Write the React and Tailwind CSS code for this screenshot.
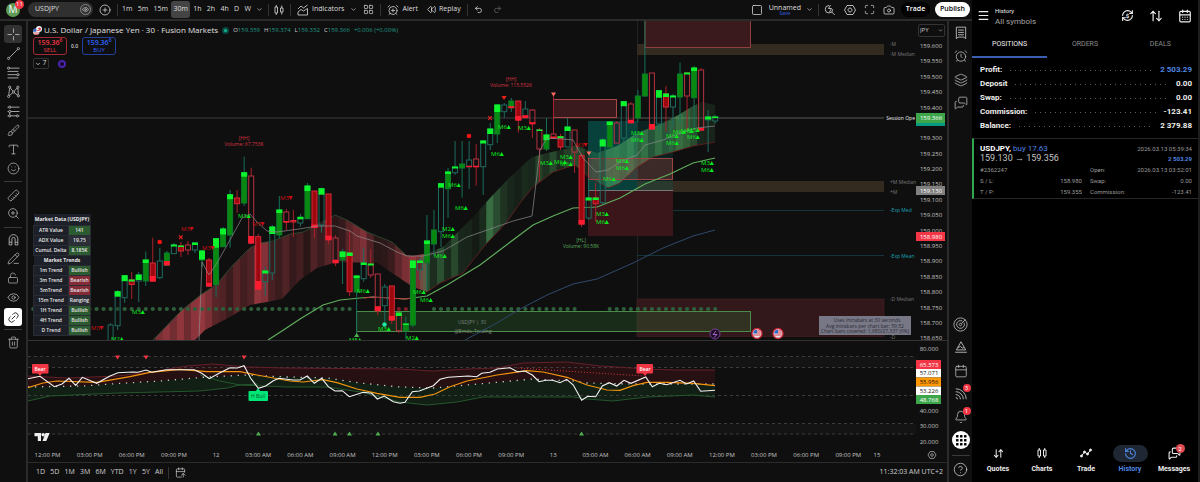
import React from "react";
import {
  Brush, Type, Smile, Ruler, ZoomIn, PencilLine, LockOpen, Eye, Link2, Trash2, CirclePlus, ChevronDown,
  LayoutGrid, AlarmClockPlus, AlarmClock, Rewind, Undo2, Redo2, Square, Maximize, Camera, Layers, MessagesSquare,
  Calendar, CalendarDays, Bell, CircleQuestionMark, Menu, ArrowDownUp, History, RefreshCw,
  CalendarArrowUp,
} from "lucide-react";

const X0 = 110.6;
const STEP = 7.03;
const cx = (i) => X0 + STEP * i;

/* kind, high, top, bottom, low, cap (positive: green at top, negative: red at bottom) */
const CANDLES = [
  ["h", 323, 325, 341, 341, 0], ["h", 290, 291.7, 325.7, 330, 5], ["h", 275, 275.7, 297.7, 303, 5.5], ["r", 272, 280, 284.5, 299, 1.5],
  ["h", 272, 275, 281, 302, 5], ["g", 251.7, 260, 281, 286, 3], ["r", 237.7, 263, 281, 281, -5], ["h", 248, 261, 277.7, 279, 0],
  ["g", 251, 253, 265, 266, -4], ["h", 243, 245, 253.7, 253.7, 1.5], ["r", 242, 246, 251, 257, 1], ["p", 241, 245, 250, 255, 0],
  ["h", 242, 243, 250, 253, 2], ["g", 250, 251, 260, 267, 8.5], ["r", 258, 260, 286, 287, -3], ["g", 238, 238.7, 284.7, 297, 9],
  ["g", 227, 229, 246.7, 247, 5.5], ["g", 190, 194.7, 235, 247.7, 4.5], ["r", 190, 198, 203.7, 213, 0], ["g", 156.7, 172.7, 203, 206, 4],
  ["p", 167.7, 176, 243, 244, -7], ["r", 234, 236.7, 289, 290, -8], ["h", 266.7, 271, 281.7, 296, 2.5], ["h", 225, 227, 273, 280, 7],
  ["g", 196, 210, 235, 238, 3], ["p", 209, 212, 222, 230, -1], ["r", 210, 220.5, 222, 237, 0], ["h", 214, 217.3, 223, 226.7, 2],
  ["g", 183, 186, 218.7, 219, 5], ["r", 191, 191, 227.5, 238, -3], ["h", 187.7, 188.7, 225, 232.7, 6], ["r", 194, 194, 239.7, 244, -4],
  ["p", 235, 238, 262.7, 266, -3], ["g", 249, 252, 260, 284, 5], ["r", 230.7, 253, 291.7, 296, 3], ["g", 275, 276, 292, 335, 2],
  ["h", 247.7, 263, 278.7, 281.7, 2], ["p", 249, 264, 275, 278, 1.5], ["p", 274, 274, 310.7, 315, -4.5], ["h", 284, 287, 305.7, 321.7, 0],
  ["r", 286, 286, 320, 324, -4], ["p", 312, 313, 330.7, 333, 3], ["g", 316.7, 324, 331, 339, 1], ["g", 260, 261, 325, 327, 7],
  ["h", 258, 261, 270, 280, 2], ["g", 215, 241, 262.7, 290, 3], ["g", 210, 230, 244, 256.7, 0], ["h", 183, 183.7, 231.7, 247, 4],
  ["g", 168, 172, 188.7, 218, 2], ["h", 141, 167, 172.7, 175, 1.5], ["g", 141, 164, 168, 197.7, 0], ["h", 141, 160, 166.7, 189, -1],
  ["p", 144, 159, 166.7, 185.7, -1], ["h", 140, 141, 166.7, 195, 2.5], ["h", 123, 129, 144.7, 150, 5], ["g", 104, 105, 134, 143, 7],
  ["h", 103, 105, 111.7, 118, 0], ["g", 98, 101, 107.7, 112, -1.5], ["r", 101, 101, 120, 132.7, -4], ["h", 101, 109, 117.7, 118, -2.5],
  ["p", 109, 110, 123.7, 138, -1.5], ["p", 128, 130, 149, 181.7, 1], ["g", 118, 135, 149, 151, 5], ["p", 95, 134, 138, 139, -1.5],
  ["r", 134, 136.7, 147, 150, 1.5], ["h", 118, 127, 147, 147, 4], ["p", 130, 130, 152, 173, 0], ["r", 153, 155.7, 224, 227, -4],
  ["h", 178, 198, 218, 220, 2.5], ["r", 183, 198, 203.7, 221.7, 2], ["h", 138, 140, 202.7, 204, 6.5], ["g", 121, 122, 147, 148, 3],
  ["p", 121, 123, 143, 143, 0], ["h", 101, 101.7, 138, 143, 4.5], ["p", 102, 104, 122.7, 124, -3], ["g", 90, 96, 118, 122, 0],
  ["g", 20, 74, 96, 97, 0], ["p", 73, 73, 129, 130, -5], ["h", 90, 90.7, 124, 131.7, 7], ["r", 86, 94, 107, 131.7, 3],
  ["h", 94, 96, 107, 127, 1.5], ["g", 62.7, 74, 97, 123, 0], ["p", 72, 73, 96, 130, 1.5], ["g", 66, 68, 97.7, 128, 3],
  ["p", 68, 70, 130, 131, -2], ["h", 110, 117, 120, 152, 2.5], ["h", 115, 117, 121, 124, 1],
];
const STYLE = {
  h: ["#0f0f0f", "#1f6b60", "#1f6b60"],
  g: ["#08890f", "#0c7d2c", "#15705a"],
  r: ["#9c0710", "#d92a38", "#a8202c"],
  p: ["#160d0e", "#b53342", "#a8202c"],
};

const RED_CLOUD = "153,340 182,310 202,294 217,284 233,265 250,248 260,243 273,241 290,234 303,232 317,225 335,215 347,220 367,232 392,242 406,255 413,256 427,253 427,292 413,287 395,275 377,263 337,262 317,268 300,280 282,299 267,302 250,305 230,317 205,330 195,340";
const GREEN_CLOUD = "420,256 427,253 443,247 460,230 473,217 490,198 510,177 532,157 547,153 570,148 575,145 597,153 617,146 637,133 663,123 680,114 693,106 702,102 715,105 715,142 693,146 673,152 653,157 637,167 620,183 608,188 590,178 575,165 553,172 533,187 520,203 507,222 487,243 473,260 463,273 440,283 427,292 420,289";
const RED_STRIPES = [30, 50, 58, 46, 60, 44, 58, 62, 50, 34, 30, 20, 34, 24, 30, 60, 54, 26, 20, 30, 18, 24, 12, 30, 20, 34, 12, 18, 34, 44, 52, 30, 12, 14, 20, 36, 50, 60, 50, 40, 22, 14, 30, 20];
const GREEN_STRIPES = [22, 36, 18, 38, 16, 34, 14, 12, 8, 16, 56, 36, 22, 14, 10, 16, 14, 30, 20, 34, 16, 28, 36, 30, 14, 20, 40, 50, 52, 46, 56, 40, 52, 34, 50, 36, 44, 56, 48, 36, 14, 12, 12];

const UP = [
  [138, 312, "M3"], [117, 339, "M2"], [244, 216, "M3"], [363, 291, "M6"], [454, 185, "M6"], [461, 208, "M6"], [448, 229, "M2"], [448, 236, "M6"],
  [440, 256, "M6"], [419, 292, "M6"], [426, 300, "M6"], [384, 329, "M3"], [412, 338, "M2"], [355, 340, "M5"], [504, 127, "M6"], [524, 128, "M3"],
  [497, 154, "M6"], [637, 133, "M3"], [637, 140, "M6"], [546, 163, "M3"], [560, 162, "M6"], [566, 157, "M3"], [566, 164, "M6"], [622, 161, "M3"],
  [622, 168, "M6"], [609, 179, "M6"], [602, 214, "M3"], [602, 222, "M6"], [672, 136, "M3"], [672, 143, "M6"], [679, 132, "M6"], [687, 131, "M6"],
  [693, 130, "M3"], [693, 137, "M6"], [707, 163, "M3"], [707, 170, "M6"],
];
const DOWN = [[187, 229], [208, 248], [286, 198], [258, 224], [97, 328], [581, 145]];

const WHITE_MA = "199,340 202,262 209,275 217,263 230,240 242,218 250,214 257,222 267,231 277,232 299,229 317,226 335,226 350,231 357,236 380,243 397,252 407,256 423,256 443,251 467,237 493,228 513,221 532,216 540,150 547,138 563,139 573,140 583,158 596,172 608,170 620,162 637,155 645,145 663,140 683,132 697,128 715,126";
const RSI = "28,378.7 40,376.3 54.3,386.7 62,384 69,378.3 75.7,385.3 82.3,377.3 96.7,383.3 110,376 118,372.7 133,372 138,372.3 146,370 151.7,372.3 166.7,369.7 194.3,369.7 201.7,373.3 209.3,378.7 220,372.7 230,367.7 237.3,368 244,365.7 250.7,378.3 258.3,388.3 265.7,386 273.3,380.7 279,378.3 293,380 300,380 307.3,376 314.3,383.3 321.7,378.3 328.3,386.7 335,391 342.3,390.7 349.3,396.7 363.3,392.3 371.7,393.3 377.3,399 384.3,396 393.3,401.7 400,403.3 405,402.3 412.3,391.7 419.3,391 433.3,385.7 440,379.3 448.3,377.3 468.3,376 476.7,376.7 481.7,373.3 490,372.3 497.3,369 510,367.7 517.3,371.7 525,371 532.3,375 539,381.7 545.7,380.3 552.7,380.3 560,382.7 566.7,379.3 573.3,385 581.7,400.3 587.7,396.3 595.7,396.7 602.3,386 609.3,382.7 616.7,386 624,380.3 631,383.3 645.7,377 652.3,386.7 659.3,383.3 666.7,384.7 680,380.3 686.7,384 693.7,381 700.7,391.3 715,390.3";
const RSI_MA = "28,387.7 43,383 57,381 97,382.3 130,376.7 150,372.3 180,369.3 207,371.7 240,371.7 257,375 290,381 303,382 323,379.7 337,382.7 357,389 377,393.3 400,397.3 420,397.3 435,394 450,386.7 467,381 497,375 527,370.7 543,372 567,377.3 587,385 607,390 620,390.3 633,385.7 647,382.3 667,382.3 693,383.3 715,385.7";
const B_UP = "28,376 67,378 117,376 150,372 187,366 213,364 247,367 287,368 400,369 433,371 467,369 497,368 523,363 567,362 600,366 647,369 677,370 715,370";
const B_MID = "28,387 83,386 110,384 160,381 207,377 247,375 287,377 327,378 360,383 400,387 433,388 467,385 500,382 533,379 573,381 587,383 633,384 715,384";
const B_LOW = "28,401 50,396 117,393 200,391 227,388 240,385 287,387 327,387 360,392 400,402 427,405 457,402 483,397 573,397 587,399 613,401 647,397 693,395 715,397";
const rev = (s) => s.split(" ").reverse().join(" ");

const PRICES = ["159.600", "159.550", "159.500", "159.450", "159.400", "", "159.300", "159.250", "159.200", "159.150", "159.100", "159.050", "159.000", "158.950", "158.900", "158.850", "158.800", "158.750", "158.700", "158.650"];
const TIMES = ["12:00 PM", "03:00 PM", "06:00 PM", "09:00 PM", "12", "03:00 AM", "06:00 AM", "09:00 AM", "12:00 PM", "03:00 PM", "06:00 PM", "09:00 PM", "13", "03:00 AM", "06:00 AM", "09:00 AM", "12:00 PM", "03:00 PM", "06:00 PM", "09:00 PM"];

function Tag({ y, h = 9, w = 29, fill, color = "#fff", children }) {
  return (
    <g>
      <rect x="916" y={y} width={w} height={h} fill={fill} />
      <text x={w > 26 ? 931 : 929} y={y + h / 2 + 2} fontSize="6" fontWeight="500" textAnchor="middle" fill={color}>{children}</text>
    </g>
  );
}

function Flag({ x, y }) {
  return (
    <g>
      <circle cx={x} cy={y} r="5" fill="#e8e4ea" stroke="#c62836" strokeWidth="1.3" />
      <path d={`M${x - 3.8} ${y}a3.8 3.8 0 0 1 3.8 -3.8v3.8z`} fill="#2f67c8" />
      <path d={`M${x} ${y - 2.5}h3M${x} ${y - 0.5}h3.8M${x - 3.8} ${y + 1.5}h7.4`} stroke="#d8414b" strokeWidth="1" />
    </g>
  );
}

function PriceChart() {
  const dots = [];
  for (let i = -11; i <= 86; i++) {
    if ((i > 34 && i < 40) || (i > 42 && i < 46) || (i > 66 && i < 71)) continue;
    dots.push(<circle key={i} cx={cx(i)} cy="309" r="2.1" fill={i >= 40 && i <= 42 ? "#7a1f28" : "#2f5f3a"} />);
  }
  return (
    <svg viewBox="28 21 919 441" preserveAspectRatio="xMinYMin meet" className="block w-full font-['Open_Sans',sans-serif]" role="img" aria-label="USDJPY 30 minute price chart with oscillator">
      <defs>
        <clipPath id="pane"><rect x="28" y="21" width="889" height="319" /></clipPath>
        <clipPath id="redCloud"><polygon points={RED_CLOUD} /></clipPath>
        <clipPath id="greenCloud"><polygon points={GREEN_CLOUD} /></clipPath>
      </defs>
      <g clipPath="url(#pane)">
        <path d="M637.5 21V337" stroke="#242424" />
        <rect x="637" y="44" width="247" height="11" fill="#332a20" />
        <rect x="645" y="10" width="105.5" height="37.5" fill="#3a1a1d" stroke="#8f3f40" />
        <rect x="637" y="181" width="247" height="11" fill="#332a20" />
        <path d="M637 210.5H884M637 255.5H884" stroke="#12343a" />
        <rect x="637" y="299" width="247" height="37.5" fill="#33181b" stroke="#4a2426" strokeWidth=".6" />
        <rect x="356.5" y="311.5" width="394" height="20" fill="#2f6b2f" fillOpacity=".32" stroke="#4a8b48" />
        <text x="472" y="324" fontSize="5" textAnchor="middle" fill="#7b837b">USDJPY | 30</text>
        <text x="473" y="333" fontSize="5" textAnchor="middle" fill="#7b837b">@Emds_Trading</text>
        <path d="M28 118H637" stroke="#3a3d3a" strokeWidth="1" />
        <path d="M637 118H884" stroke="#565a56" strokeWidth="1" />
        <rect x="588" y="121" width="49" height="69" fill="#00897b" fillOpacity=".42" />
        <rect x="637" y="121" width="36" height="69" fill="#00897b" fillOpacity=".16" />
        <rect x="588" y="190" width="85" height="46" fill="#3a161b" />
        <path d="M588 190.5H673" stroke="#777" />
        <g clipPath="url(#redCloud)">
          {RED_STRIPES.map((a, k) => <rect key={k} x={cx(5 + k) + 3} y="200" width="7.1" height="142" fill="#e5505c" fillOpacity={a / 100} />)}
        </g>
        <g clipPath="url(#greenCloud)">
          {GREEN_STRIPES.map((a, k) => <rect key={k} x={cx(44 + k) - 4} y="90" width="7.1" height="210" fill="#58b868" fillOpacity={a / 100} />)}
        </g>
        <polyline points="153,340 182,310 202,294 217,284 233,265 250,248 260,243 273,241 290,234 303,232 317,225 335,215 347,220 367,232 392,242 406,255" fill="none" stroke="#2c4f30" strokeWidth=".8" />
        <polyline points="427,292 440,283 463,273 473,260 487,243 507,222 520,203 533,187 553,172 575,165 590,178 608,188 620,183 637,167 653,157 673,152 693,146 715,142" fill="none" stroke="#6d2020" strokeWidth=".8" />
        <rect x="553.5" y="99.5" width="63" height="18" fill="#3a1a1d" stroke="#a84848" />
        <rect x="588.5" y="158.5" width="84" height="21" fill="#a03a3a" fillOpacity=".32" stroke="#9c4444" />
        {dots}
        <polyline points="268,340 285,329 300,319 323,305 340,300 360,298 373,297 405,299 427,296 447,285 480,265 513,240 533,225 553,216 573,208 597,207 620,198 645,184 670,174 693,163 715,158" fill="none" stroke="#5fae5c" strokeWidth="1.2" />
        <path d="M364 298L373 297L405 299L412 298" fill="none" stroke="#c33a3f" strokeWidth="1.2" />
        <polyline points="465,340 497,323 520,309 547,295 573,284 597,279 633,263 663,248 693,236 715,230" fill="none" stroke="#30496c" />
        {CANDLES.map(([kind, hi, top, bot, lo, cap], i) => {
          const [fill, stroke, wick] = STYLE[kind];
          const x = cx(i);
          return (
            <g key={i}>
              <path d={`M${x} ${hi}V${top}M${x} ${bot}V${lo}`} stroke={wick} />
              <rect x={x - 2.5} y={top} width="5" height={Math.max(bot - top, 1)} fill={fill} fillOpacity={kind === "h" || kind === "p" ? 0.25 : 1} stroke={stroke} />
              {cap > 0 && <rect x={x - 3} y={top - 0.5} width="6" height={cap + 0.5} fill="#0cf52c" />}
              {cap < 0 && <rect x={x - 3} y={bot + cap} width="6" height={0.5 - cap} fill="#ff1c30" />}
            </g>
          );
        })}
        <polyline points={WHITE_MA} fill="none" stroke="#8c8c8c" strokeWidth=".7" />
        {UP.map(([x, y, t], i) => (
          <g key={i} fill="#09e81c">
            <text x={x - 6} y={y + 2} fontSize="6">{t}</text>
            <path d={`M${x + 2.5} ${y + 2}l2.2 -4l2.2 4z`} />
          </g>
        ))}
        {DOWN.map(([x, y], i) => (
          <g key={i} fill="#c60f14">
            <text x={x - 6} y={y + 2} fontSize="6">M3</text>
            <path d={`M${x + 2.5} ${y - 2}h4.4l-2.2 4z`} />
          </g>
        ))}
        <path d="M501.5 96h5l-2.5 4z" fill="#f22218" />
        <path d="M551 92.5h5l-2.5 4zM586.5 151.5h5l-2.5 4z" fill="#ff6a60" />
        <circle cx="159.7" cy="242" r="2.3" fill="#f01414" />
        <circle cx="469" cy="136" r="2.3" fill="#f01414" />
        <circle cx="384.5" cy="324.5" r="2.2" fill="#20e8a0" />
        <path d="M179 235.5l3.6 3.6m0 -3.6l-3.6 3.6M488.2 116.2l3.6 3.6m0 -3.6l-3.6 3.6" stroke="#ee2222" strokeWidth="1.1" />
        <path d="M354 337l2.7 -4l2.7 4z" fill="#4caf50" />
        <g fontSize="5" textAnchor="middle">
          <g fill="#d93344"><text x="244" y="140">[HH]</text><text x="244" y="146">Volume: 67.753K</text><text x="511" y="81">[HH]</text><text x="511" y="87">Volume: 115.552K</text></g>
          <g fill="#5bab5e"><text x="581" y="242">[HL]</text><text x="581" y="248">Volume: 90.58K</text></g>
        </g>
        <g fontSize="5" fill="#77777a">
          <text x="890" y="46">-M</text><text x="890" y="56">-M Median</text>
          <text x="890" y="184">+M Median</text><text x="890" y="194">+M</text>
          <text x="890" y="301">-D Median</text><text x="890" y="339">-D</text>
          <g fill="#16a3b4"><text x="890" y="212">-Exp Med</text><text x="890" y="258">-Exp Mean</text></g>
        </g>
        <text x="915" y="120" fontSize="5" fontWeight="500" textAnchor="end" fill="#eee">Session Ope</text>
        <circle cx="715" cy="334" r="5" fill="#1c0f26" stroke="#7a3b96" />
        <path d="M716 331l-3 3.5h4l-3 3" fill="none" stroke="#b56fd6" strokeWidth=".9" />
        <Flag x={757} y={333.5} />
        <Flag x={778} y={333.5} />
        <rect x="819" y="316" width="92" height="19" fill="#777785" />
        <g fontSize="5" textAnchor="middle" fill="#2b2b36">
          <text x="867" y="322">Uses intrabars at 30 seconds</text>
          <text x="865" y="328">Avg intrabars per chart bar: 59.52</text>
          <text x="865" y="333">Chart bars covered: 1,680/27,337 (6%)</text>
        </g>
      </g>
      <path d="M28 340.5H947" stroke="#333" />

      <g>
        <rect x="28" y="356.5" width="888" height="11" fill="#141414" />
        <rect x="28" y="423.5" width="888" height="10.5" fill="#141414" />
        <polygon points={`${B_UP} ${rev(B_MID)}`} fill="#261012" />
        <polygon points={`${B_MID} ${rev(B_LOW)}`} fill="#111f14" />
        <path d="M28 356.5H916M28 367.5H916M28 395.5H916M28 423.5H916M28 434H916" stroke="#474747" strokeWidth=".8" strokeDasharray="3 3" />
        <polyline points={B_UP} fill="none" stroke="#64202a" />
        <polyline points={B_LOW} fill="none" stroke="#24562c" />
        <polyline points="200,375 220,381 240,385 258,384" fill="none" stroke="#24562c" />
        <polyline points={B_MID} fill="none" stroke="#ccc" strokeWidth="1.3" strokeDasharray="1.3 5.7" />
        <path d="M518 368L643 376" stroke="#d03a3a" strokeDasharray="1 2" />
        <polyline points={RSI_MA} fill="none" stroke="#f2940c" strokeWidth="1.2" />
        <polyline points={RSI} fill="none" stroke="#f4f4f4" strokeWidth="1.1" />
        <g fill="#f23645">
          <rect x="32" y="364" width="16.5" height="9.5" rx="1" /><path d="M37.5 373h5l-2.5 3z" />
          <rect x="636.5" y="364" width="16.5" height="9.5" rx="1" /><path d="M642.5 373h5l-2.5 3z" />
          <path d="M115 355.5h5l-2.5 4zM143.5 355.5h5l-2.5 4zM241.5 355.5h5l-2.5 4z" />
        </g>
        <g fill="#00e676"><rect x="248.5" y="391" width="19.5" height="10" rx="1" /><path d="M255.5 391.5h5l-2.5 -3.5z" /></g>
        <g fontSize="5" fontWeight="600" textAnchor="middle"><text x="40" y="371" fill="#fff">Bear</text><text x="645" y="371" fill="#fff">Bear</text><text x="258" y="398" fill="#07552c" fontWeight="400">H Bull</text></g>
        <g fill="#4caf50">{[258.5, 335, 349.5, 378, 581.5].map((x) => <path key={x} d={`M${x - 2.5} 435.5h5l-2.5 -4z`} />)}</g>
        <path d="M34.5 433h6.500v8h-3.200v-4.800h-3.300zM45.5 433h4.200l-3.400 8h-3.800z" fill="#eee" />
        <circle cx="43.2" cy="434.8" r="1.7" fill="#eee" />
      </g>

      <g fontSize="6" fill="#c4c4c4" textAnchor="middle">
        {PRICES.map((p, i) => <text key={i} x="931" y={48 + 15.385 * i}>{p}</text>)}
        <text x="929" y="351">80.000</text><text x="929" y="413">40.000</text><text x="929" y="428">30.000</text><text x="929" y="444">20.000</text>
        {TIMES.map((t, i) => <text key={i} x={47.5 + 42.15 * i} y="457">{t}</text>)}
        <text x="877" y="457">15</text>
      </g>
      <rect x="916" y="121" width="29" height="5" fill="#089981" />
      <Tag y={113} h={10} fill="#3da64b">159.366</Tag>
      <Tag y={186} fill="#808080">159.130</Tag>
      <Tag y={232} fill="#f23645">158.980</Tag>
      <Tag y={360} w={25} fill="#f23645">65.373</Tag>
      <Tag y={369} w={25} h={8.5} fill="#fff" color="#111">57.071</Tag>
      <Tag y={377.5} w={25} fill="#ff9800" color="#111">55.956</Tag>
      <Tag y={386.5} w={25} h={8.5} fill="#fff" color="#111">53.226</Tag>
      <Tag y={395} w={25} fill="#3da64b">48.768</Tag>
      <path d="M928 455l2 -3.400h4l2 3.400l-2 3.400h-4z" fill="none" stroke="#aaa" strokeWidth=".8" /><circle cx="932" cy="455" r="1.300" fill="none" stroke="#aaa" strokeWidth=".8" />
    </svg>
  );
}

const MARKET = [["ATR Value", "141", "g"], ["ADX Value", "19.75", "n"], ["Cumul. Delta", "8.185K", "g"]];
const TRENDS = [["1m Trend", "Bullish", "g"], ["3m Trend", "Bearish", "r"], ["5mTrend", "Bearish", "r"], ["15m Trend", "Ranging", "n"], ["1H Trend", "Bullish", "g"], ["4H Trend", "Bullish", "g"], ["D Trend", "Bullish", "g"]];
const CELL = { g: "bg-[#2c5a31]", r: "bg-[#822a35]", n: "bg-[#2c2e38]" };

function DataRows({ rows }) {
  return rows.map(([k, v, c]) => (
    <tr key={k} className="h-[10px]">
      <th scope="row" className="border border-[#2a2c34] bg-[#1e2029] p-0 font-semibold">{k}</th>
      <td className={`border border-[#2a2c34] p-0 text-center ${CELL[c]}`}>{v}</td>
    </tr>
  ));
}

function MarketTable() {
  return (
    <table className="absolute top-[193px] left-[5px] w-[58px] border-collapse text-[5px] leading-[9px] font-semibold text-[#e8e8e8]">
      <tbody>
        <tr className="h-[11px]"><th colSpan={2} className="bg-[#1e2029] p-0">Market Data (USDJPY)</th></tr>
        <DataRows rows={MARKET} />
        <tr className="h-[10px]"><th colSpan={2} className="bg-[#1e2029] p-0">Market Trends</th></tr>
        <DataRows rows={TRENDS} />
      </tbody>
    </table>
  );
}

function Line({ d, dots = [], size = 13, weight = 1.6 }) {
  return (
    <svg viewBox="0 0 24 24" width={size} height={size} fill="none" stroke="currentColor" strokeWidth={weight} strokeLinejoin="round" aria-hidden="true">
      <path d={d} />
      {dots.map(([x, y], i) => <circle key={i} cx={x} cy={y} r="2" fill="#0f0f0f" />)}
    </svg>
  );
}

function DotGrid() {
  return (
    <svg viewBox="0 0 24 24" width="12" height="12" fill="currentColor" aria-hidden="true">
      {[2, 10, 18].map((y) => [2, 10, 18].map((x) => <rect key={`${x}-${y}`} x={x} y={y} width="5" height="5" rx="1" />))}
    </svg>
  );
}

function Tool({ label, className = "", children }) {
  return <button aria-label={label} className={`flex h-[18px] w-[18px] shrink-0 items-center justify-center rounded-[3px] ${className}`}>{children}</button>;
}
const I = { size: 13, strokeWidth: 1.4 };
const Sep = () => <span className="h-px w-[18px] shrink-0 bg-[#3a3a3a]" />;
const VSep = ({ className = "" }) => <span className={`h-[12px] w-px shrink-0 bg-[#333] ${className}`} />;

function LeftTools() {
  return (
    <nav aria-label="Drawing tools" className="flex w-[28px] shrink-0 flex-col items-center border-r-2 border-[#2b2b2b] pt-[4px]">
      <div className="flex h-[153px] flex-col justify-between">
        <Tool label="Cross" className="bg-[#323232]"><Line d="M12 1v8M12 15v8M1 12h8M15 12h8" /></Tool>
        <Tool label="Trend line"><Line d="M3 21L21 3" dots={[[3, 21], [21, 3]]} /></Tool>
        <Tool label="Fibonacci"><Line d="M1 4h22M1 10h20M1 16h22M1 22h20" dots={[[3, 4], [20, 16]]} /></Tool>
        <Tool label="Patterns"><Line d="M3 21L5 4L12 13L20 4L21 20L12 13L3 21" dots={[[3, 21], [5, 4], [12, 13], [20, 4], [21, 20]]} /></Tool>
        <Tool label="Forecasting"><Line d="M1 4h22M1 12h22M1 20h22M5 12v8" dots={[[5, 4], [5, 12], [5, 20], [19, 20]]} /></Tool>
        <Tool label="Brush"><Brush {...I} /></Tool>
        <Tool label="Text"><Type {...I} /></Tool>
        <Tool label="Icons"><Smile {...I} /></Tool>
      </div>
      <span className="h-[3px]" /><Sep /><span className="h-[4px]" />
      <Tool label="Measure"><Ruler {...I} className="rotate-90" /></Tool>
      <Tool label="Zoom in"><ZoomIn {...I} /></Tool>
      <span className="h-[5px]" /><Sep /><span className="h-[2px]" />
      <div className="flex h-[96px] flex-col justify-between">
        <Tool label="Magnet"><Line d="M4 22V11a8 8 0 0 1 16 0v11h-5V11a3 3 0 0 0 -6 0v11zM4 17h5M15 17h5" /></Tool>
        <Tool label="Keep drawing"><PencilLine {...I} /></Tool>
        <Tool label="Lock drawings"><LockOpen {...I} size={12} /></Tool>
        <Tool label="Hide drawings"><Eye {...I} /></Tool>
        <Tool label="Sync drawings" className="bg-white text-black"><Link2 {...I} className="-rotate-45" /></Tool>
      </div>
      <span className="h-[3px]" /><Sep /><span className="h-[3px]" />
      <Tool label="Remove"><Trash2 {...I} /></Tool>
    </nav>
  );
}

function Badge({ children }) {
  return <span className="absolute -top-[1px] -right-[1px] flex h-[8px] w-[8px] items-center justify-center rounded-full bg-[#f23645] text-[6px] leading-none text-white">{children}</span>;
}

function RightTools() {
  return (
    <nav aria-label="Widgets" className="flex w-[25px] shrink-0 flex-col items-center justify-between border-l-2 border-[#2b2b2b] pt-[3px] pb-[3px]">
      <div className="flex h-[88px] flex-col justify-between">
        <Tool label="Watchlist"><Line size={14} d="M4 2h16v20l-3 -3h-10l-3 3zM7 7h10M7 11h10M7 15h10" /></Tool>
        <Tool label="Alerts"><AlarmClock {...I} size={14} /></Tool>
        <Tool label="Object tree"><Layers {...I} size={14} /></Tool>
        <Tool label="Chats"><MessagesSquare {...I} size={14} className="-scale-x-100" /></Tool>
      </div>
      <div className="flex h-[164px] flex-col items-center justify-between">
        <Tool label="Screeners"><Line size={15} weight={1.4} d="M12 1.500a10.500 10.500 0 1 0 .01 0M17.500 9a6.200 6.200 0 1 1 -2.500 -2.500M12 10a2 2 0 1 0 .01 0M13.500 10.500L20 4" /></Tool>
        <Tool label="Ideas"><Line size={14} d="M2 21h20M4 17L12 3L20 17zM7 13l4 -2l3 3l3 -1" /></Tool>
        <Tool label="Calendar"><Calendar {...I} size={14} /></Tool>
        <Tool label="Feed" className="relative"><Line size={14} d="M3 3a18 18 0 0 1 18 18M3 8a13 13 0 0 1 13 13M3 13a8 8 0 0 1 8 8M3 18a3 3 0 0 1 3 3" /><Badge>3</Badge></Tool>
        <Tool label="Notifications" className="relative"><Bell {...I} size={14} /><Badge>1</Badge></Tool>
        <Tool label="Products" className="rounded-full bg-white text-black"><DotGrid /></Tool>
        <Sep />
        <Tool label="Help"><CircleQuestionMark {...I} size={15} /></Tool>
      </div>
    </nav>
  );
}

const FRAMES = ["1m", "5m", "15m", "30m", "1h", "2h", "4h", "D", "W"];

function TopBar() {
  return (
    <header className="flex h-[21px] shrink-0 items-center border-b-2 border-[#2b2b2b] pr-[2px] pl-[6px] text-[7px] font-medium text-[#dedede]">
      <button aria-label="Account" className="relative flex h-[14px] w-[14px] shrink-0 items-center justify-center rounded-full bg-[#5f9a55] text-[10px] text-white">
        M<span className="absolute -top-[3px] left-[9px] flex h-[9px] w-[9px] items-center justify-center rounded-full bg-[#f23645] text-[6px]">11</span>
      </button>
      <button className="ml-[8px] flex h-[15px] w-[65px] shrink-0 items-center justify-between rounded-full bg-[#303030] pr-[2px] pl-[7px] text-[7px]">
        USDJPY
        <span className="flex h-[11px] w-[11px] items-center justify-center rounded-full border border-[#888]"><Eye size={7} /></span>
      </button>
      <button aria-label="Compare" className="ml-[6px]"><CirclePlus size={12} strokeWidth={1.5} /></button>
      <VSep className="ml-[6px]" />
      <div className="ml-[2px] flex w-[133px] shrink-0 items-center justify-between">
        {FRAMES.map((f) => <button key={f} className={`flex h-[17px] items-center rounded-[3px] px-[2px] ${f === "30m" ? "bg-[#444]" : ""}`}>{f}</button>)}
      </div>
      <button aria-label="More intervals" className="ml-[3px]"><ChevronDown size={7} /></button>
      <VSep className="ml-[5px]" />
      <button aria-label="Chart style" className="ml-[4px]"><Line size={12} d="M4 6h5v12h-5zM6.500 2v4M6.500 18v4M15 8h5v8h-5zM17.500 3v5M17.500 16v5" /></button>
      <VSep className="ml-[5px]" />
      <button className="ml-[6px] flex items-center gap-[3px]"><Line size={12} d="M2 10l6 -6l5 4l8 -6M2 22v-6l6 -5l5 3l8 -5v13z" />Indicators</button>
      <button aria-label="Indicator favourites" className="ml-[6px]"><ChevronDown size={7} /></button>
      <button aria-label="Layout templates" className="ml-[6px]"><LayoutGrid size={11} strokeWidth={1.5} /></button>
      <VSep className="ml-[6px]" />
      <button className="ml-[6px] flex items-center gap-[3px]"><AlarmClockPlus size={12} strokeWidth={1.5} />Alert</button>
      <button className="ml-[9px] flex items-center gap-[3px]"><Rewind size={9} strokeWidth={2} />Replay</button>
      <VSep className="ml-[6px]" />
      <button aria-label="Undo" className="ml-[6px]"><Undo2 size={9} /></button>
      <button aria-label="Redo" className="ml-[10px] text-[#666]"><Redo2 size={9} /></button>
      <div className="ml-auto flex items-center">
        <button aria-label="Layout"><Square size={12} strokeWidth={1.5} /></button>
        <button className="ml-[6px] flex flex-col items-center leading-[7px]">Unnamed<span className="text-[5px] leading-[5px] text-[#2f62e8]">Save</span></button>
        <button aria-label="Manage layouts" className="ml-[5px]"><ChevronDown size={7} /></button>
        <VSep className="ml-[5px]" />
        <button aria-label="Quick search" className="ml-[5px]"><Line size={12} d="M10 3a7.500 7.500 0 1 0 7.500 7.500M15.500 16l6 6M13 2l-4 7h6l-4 7" /></button>
        <button aria-label="Settings" className="ml-[8px]"><Line size={12} d="M1 12l5 -9h12l5 9l-5 9h-12zM12 8a4 4 0 1 0 .01 0" /></button>
        <button aria-label="Fullscreen" className="ml-[8px]"><Maximize size={11} strokeWidth={1.5} /></button>
        <button aria-label="Snapshot" className="ml-[8px]"><Camera size={12} strokeWidth={1.5} /></button>
        <button className="ml-[6px] h-[15px] w-[29px] rounded-full bg-black font-semibold text-white">Trade</button>
        <button className="ml-[5px] h-[15px] w-[35px] rounded-full bg-white font-semibold text-black">Publish</button>
      </div>
    </header>
  );
}

function Legend() {
  return (
    <div className="absolute top-[4px] left-[5px]">
      <div className="flex h-[10px] items-center text-[8px] font-medium whitespace-nowrap text-[#e0e0e0]">
        <svg width="9" height="9" viewBox="0 0 18 18" className="mr-[2px]" aria-hidden="true">
          <circle cx="12" cy="6" r="6" fill="#f4f4f4" /><circle cx="13" cy="6" r="3" fill="#d8414b" />
          <circle cx="6.500" cy="11.500" r="6.500" fill="#eee" /><path d="M0 11.500a6.500 6.500 0 0 1 6.500 -6.500v6.500z" fill="#2f67c8" /><path d="M7 9h6M1 14h11M3 17h7" stroke="#d8414b" strokeWidth="1.500" />
        </svg>
        <h1>U.S. Dollar / Japanese Yen · 30 · Fusion Markets</h1>
        <span className="mx-[4px] flex h-[7px] w-[7px] items-center justify-center rounded-full bg-[#0a4a40]"><span className="h-[3px] w-[3px] rounded-full bg-[#12b896]" /></span>
        <dl className="flex gap-[4px] text-[6px] font-normal text-[#1f9a88]">
          {[["O", "159.359"], ["H", "159.374"], ["L", "159.332"], ["C", "159.366"]].map(([k, v]) => <div key={k} className="flex"><dt className="text-[#d0d0d0]">{k}</dt><dd>{v}</dd></div>)}
          <div>+0.006 (+0.00%)</div>
        </dl>
      </div>
      <div className="mt-[2px] flex items-center gap-[4px] text-[7px] leading-[7px]">
        <button className="h-[18px] w-[34px] rounded-[3px] border border-[#a32a34] text-[#f23645]"><b className="font-semibold">159.36<sup className="text-[5px]">6</sup></b><br /><span className="text-[6px]">SELL</span></button>
        <span className="text-[5px] font-semibold text-[#ccc]">0.0</span>
        <button className="h-[18px] w-[34px] rounded-[3px] border border-[#24409c] text-[#2f62ff]"><b className="font-semibold">159.36<sup className="text-[5px]">6</sup></b><br /><span className="text-[6px]">BUY</span></button>
      </div>
      <div className="mt-[3px] flex items-center gap-[9px]">
        <button className="flex h-[11px] w-[16px] items-center justify-center gap-[1px] rounded-[2px] border border-[#333] text-[7px] text-[#ddd]"><ChevronDown size={6} strokeWidth={3} />7</button>
        <span className="flex h-[8px] w-[8px] items-center justify-center rounded-full border-2 border-[#4a24a8] bg-[#160a33]" />
      </div>
    </div>
  );
}

function BottomBar() {
  return (
    <footer className="flex h-[20px] shrink-0 items-center border-t border-[#2b2b2b] pr-[4px] pl-[8px] text-[7px] font-medium text-[#d0d0d0]">
      <div className="flex w-[127px] justify-between">
        {["1D", "5D", "1M", "3M", "6M", "YTD", "1Y", "5Y", "All"].map((r) => <button key={r}>{r}</button>)}
      </div>
      <VSep className="ml-[5px]" />
      <button aria-label="Go to date" className="ml-[6px]"><CalendarArrowUp size={11} strokeWidth={1.5} /></button>
      <time className="ml-auto">11:32:03 AM UTC+2</time>
    </footer>
  );
}

const TOTALS = [["Profit:", "2 503.29"], ["Deposit", "0.00"], ["Swap:", "0.00"], ["Commission:", "-123.41"], ["Balance:", "2 379.88"]];

function Phone() {
  return (
    <aside className="flex w-[228px] shrink-0 flex-col border-r-2 border-[#1d1d1d] bg-black font-['Roboto',sans-serif] text-[#eee]">
      <header className="flex h-[31px] items-center pr-[6px] pl-[5px]">
        <button aria-label="Menu"><Menu size={13} strokeWidth={2.2} /></button>
        <div className="ml-[5px] leading-[11px]"><div className="text-[6px]">History</div><div className="text-[8px] text-[#a4a4a4]">All symbols</div></div>
        <div className="ml-auto flex items-center gap-[15px]">
          <button aria-label="Currency" className="relative flex items-center justify-center"><RefreshCw size={13} strokeWidth={2} /><span className="absolute text-[6px] font-bold">$</span></button>
          <button aria-label="Sort"><ArrowDownUp size={14} strokeWidth={2} className="-scale-x-100" /></button>
          <button aria-label="Period"><CalendarDays size={14} strokeWidth={2} /></button>
        </div>
      </header>
      <div role="tablist" className="grid h-[27px] grid-cols-3 text-[7px]">
        <button role="tab" aria-selected="true" className="border-b-2 border-[#3a5fae] pt-[2px]">POSITIONS</button>
        <button role="tab" aria-selected="false" className="border-b-2 border-transparent pt-[2px] text-[#8c8c8c]">ORDERS</button>
        <button role="tab" aria-selected="false" className="border-b-2 border-transparent pt-[2px] text-[#8c8c8c]">DEALS</button>
      </div>
      <dl className="flex flex-col pt-[5px] pr-[6px] pl-[8px] text-[8px] font-bold">
        {TOTALS.map(([k, v], i) => (
          <div key={k} className="flex h-[14px] items-center gap-[8px]">
            <dt>{k}</dt>
            <span className="h-px flex-1 bg-[linear-gradient(90deg,#5c5c5c_1px,transparent_1px)] bg-[size:5px_1px]" />
            <dd className={i === 0 ? "text-[#4f86e0]" : ""}>{v}</dd>
          </div>
        ))}
      </dl>
      <article className="mt-[5px] border-y border-l-2 border-y-[#262626] border-l-[#2fa84f] pt-[4px] pr-[6px] pb-[1px] pl-[6px] text-[6px] leading-[11px] text-[#9a9a9a]">
        <div className="flex h-[10px] items-center justify-between"><h2 className="text-[8px] font-bold text-white">USDJPY, <span className="font-normal text-[#4f86e0]">buy 17.63</span></h2><time>2026.03.13 05:39:34</time></div>
        <div className="flex h-[10px] items-center justify-between"><span className="text-[9px] text-[#c4c4c4]">159.130 → 159.356</span><b className="text-[#4f86e0]">2 503.29</b></div>
        <div className="mt-[1px] grid grid-cols-2 gap-x-[8px]">
          <span>#2362247</span><span className="flex justify-between"><span>Open:</span><span>2026.03.13 03:52:01</span></span>
          <span className="flex justify-between"><span>S / L:</span><span>158.980</span></span><span className="flex justify-between"><span>Swap:</span><span>0.00</span></span>
          <span className="flex justify-between"><span>T / P:</span><span>159.355</span></span><span className="flex justify-between"><span>Commission:</span><span>-123.41</span></span>
        </div>
      </article>
      <nav className="mt-auto grid grid-cols-5 pr-[2px] pb-[8px] pl-[4px] text-[7px] font-bold">
        {[
          ["Quotes", <ArrowDownUp key="q" size={11} strokeWidth={2.2} className="-scale-100" />],
          ["Charts", <Line key="c" size={12} weight={2} d="M4 6h5v12h-5zM6.500 2v4M6.500 18v4M15 6h5v12h-5zM17.500 2v4M17.500 18v4" />],
          ["Trade", <ChartGlyph key="t" />],
          ["History", <History key="h" size={13} strokeWidth={2} />],
          ["Messages", <span key="m" className="relative"><MessagesSquare size={13} strokeWidth={2} className="-scale-x-100" /><span className="absolute -top-[3px] -right-[4px] flex h-[9px] w-[9px] items-center justify-center rounded-full bg-[#e04a50] text-[6px] font-normal text-white">2</span></span>],
        ].map(([t, icon]) => (
          <a key={t} href={`#${t.toLowerCase()}`} className={`flex flex-col items-center gap-[2px] ${t === "History" ? "text-[#4f86e0]" : ""}`}>
            <span className={`flex h-[17px] w-[35px] items-center justify-center rounded-full ${t === "History" ? "bg-[#202734]" : ""}`}>{icon}</span>
            {t}
          </a>
        ))}
      </nav>
    </aside>
  );
}

function ChartGlyph() {
  return (
    <svg viewBox="0 0 24 24" width="12" height="12" fill="currentColor" stroke="currentColor" strokeWidth="2" aria-hidden="true">
      <path d="M3 18L9 10L15 14L21 6" fill="none" />
      <circle cx="3" cy="18" r="2" /><circle cx="9" cy="10" r="2" /><circle cx="15" cy="14" r="2" /><circle cx="21" cy="6" r="2" />
    </svg>
  );
}

export default function App() {
  return (
    <div className="flex min-h-screen bg-[#0f0f0f] font-['Open_Sans',sans-serif] text-[#b8b8b8]">
      <div className="flex min-w-0 flex-1 flex-col">
        <TopBar />
        <div className="flex flex-1">
          <LeftTools />
          <main className="flex min-w-0 flex-1 flex-col">
            <div className="relative flex-1 overflow-hidden">
              <PriceChart />
              <Legend />
              <MarketTable />
              <label className="absolute top-[3px] right-[2px] flex h-[13px] w-[27px] items-center rounded-[2px] border border-[#333] bg-[#0f0f0f] pr-[1px]">
                <select aria-label="Currency" defaultValue="JPY" className="min-w-0 flex-1 appearance-none bg-transparent pl-[1px] text-[6px] text-[#ccc]">
                  <option>JPY</option>
                </select>
                <ChevronDown size={5} strokeWidth={3} />
              </label>
            </div>
            <BottomBar />
          </main>
          <RightTools />
        </div>
      </div>
      <Phone />
    </div>
  );
}
